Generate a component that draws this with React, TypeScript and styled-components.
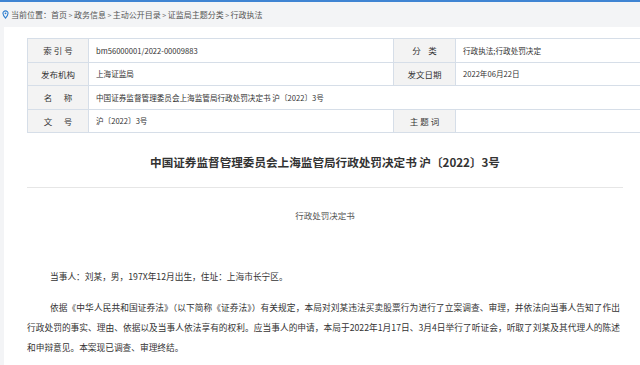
import React from "react";
import styled, { createGlobalStyle } from "styled-components";

const GlobalStyle = createGlobalStyle`
  html, body { margin: 0; padding: 0; }
  body {
    background: #f3f4f6;
    font-family: "Noto Sans CJK SC", "Noto Sans", sans-serif;
    color: #333;
    overflow: hidden;
  }
`;

const Page = styled.div`
  width: 640px;
  height: 365px;
  overflow: hidden;
  border-top: 2px solid #3f84d3;
  box-sizing: border-box;
`;

const Breadcrumb = styled.div`
  height: 25px;
  display: flex;
  align-items: center;
  padding-left: 2px;
  font-size: 8px;
  color: #555;
`;

const Crumb = styled.span`
  white-space: nowrap;
`;

const Sep = styled.span`
  margin: 0 1.5px;
  font-size: 7px;
  color: #777;
`;

const PinBox = styled.span`
  display: inline-flex;
  margin-right: 2px;
`;

const Content = styled.div`
  margin-left: 4px;
  background: #fff;
  padding: 11px 17px 40px 23px;
`;

const InfoTable = styled.table`
  width: 596px;
  border-collapse: collapse;
  table-layout: fixed;
  border: 1px solid #d6dee8;
`;

const Label = styled.td<{ $w: number }>`
  width: ${(p) => p.$w}px;
  height: 22.5px;
  padding: 0;
  background: #f3f3f3;
  border: 1px solid #d6dee8;
  text-align: center;
  font-size: 8.5px;
  color: #333;
  white-space: pre;
`;

const Value = styled.td<{ $w?: number }>`
  ${(p) => (p.$w ? `width: ${p.$w}px;` : "")}
  padding: 0 0 0 7px;
  border: 1px solid #d6dee8;
  font-size: 7.6px;
  color: #333;
  white-space: nowrap;
  overflow: hidden;
`;

const Title = styled.h1`
  margin: 19px 0 0;
  padding-bottom: 15px;
  line-height: 20px;
  font-size: 11.6px;
  font-weight: bold;
  text-align: center;
  color: #333;
  border-bottom: 1px solid #e6e6e6;
`;

const SubTitle = styled.div`
  margin-top: 17px;
  line-height: 20px;
  font-size: 8.5px;
  text-align: center;
  color: #555;
`;

const Para = styled.p<{ $top: number }>`
  margin: ${(p) => p.$top}px 3px 0 0;
  font-size: 8.7px;
  line-height: 20px;
  text-indent: 2.65em;
  color: #333;
  text-align: justify;
`;

const Pin = () => (
  <svg width="7" height="9" viewBox="0 0 10 13">
    <path
      d="M5 1.2C2.9 1.2 1.3 2.8 1.3 4.8c0 2.7 3.7 6.9 3.7 6.9s3.7-4.2 3.7-6.9C8.7 2.8 7.1 1.2 5 1.2z"
      fill="none"
      stroke="#2f7fd0"
      strokeWidth="1.6"
    />
    <circle cx="5" cy="4.8" r="1.3" fill="#2f7fd0" />
  </svg>
);

const crumbs = ["首页", "政务信息", "主动公开目录", "证监局主题分类", "行政执法"];

export default function App() {
  return (
    <Page>
      <GlobalStyle />
      <Breadcrumb>
        <PinBox>
          <Pin />
        </PinBox>
        <Crumb>当前位置：</Crumb>
        {crumbs.map((c, i) => (
          <React.Fragment key={c}>
            {i > 0 && <Sep>&gt;</Sep>}
            <Crumb>{c}</Crumb>
          </React.Fragment>
        ))}
      </Breadcrumb>
      <Content>
        <InfoTable>
          <tbody>
            <tr>
              <Label $w={60}>{"索 引 号"}</Label>
              <Value $w={297}>bm56000001/2022-00009883</Value>
              <Label $w={61}>{"分    类"}</Label>
              <Value $w={178}>行政执法;行政处罚决定</Value>
            </tr>
            <tr>
              <Label $w={60}>发布机构</Label>
              <Value>上海证监局</Value>
              <Label $w={61}>发文日期</Label>
              <Value>2022年06月22日</Value>
            </tr>
            <tr>
              <Label $w={60}>{"名      称"}</Label>
              <Value colSpan={3}>中国证券监督管理委员会上海监管局行政处罚决定书 沪〔2022〕3号</Value>
            </tr>
            <tr>
              <Label $w={60}>{"文      号"}</Label>
              <Value>沪〔2022〕3号</Value>
              <Label $w={61}>{"主 题 词"}</Label>
              <Value></Value>
            </tr>
          </tbody>
        </InfoTable>
        <Title>中国证券监督管理委员会上海监管局行政处罚决定书 沪〔2022〕3号</Title>
        <SubTitle>行政处罚决定书</SubTitle>
        <Para $top={42}>当事人：刘某，男，197X年12月出生，住址：上海市长宁区。</Para>
        <Para $top={11}>
          依据《中华人民共和国证券法》（以下简称《证券法》）有关规定，本局对刘某违法买卖股票行为进行了立案调查、审理，并依法向当事人告知了作出行政处罚的事实、理由、依据以及当事人依法享有的权利。应当事人的申请，本局于2022年1月17日、3月4日举行了听证会，听取了刘某及其代理人的陈述和申辩意见。本案现已调查、审理终结。
        </Para>
      </Content>
    </Page>
  );
}
